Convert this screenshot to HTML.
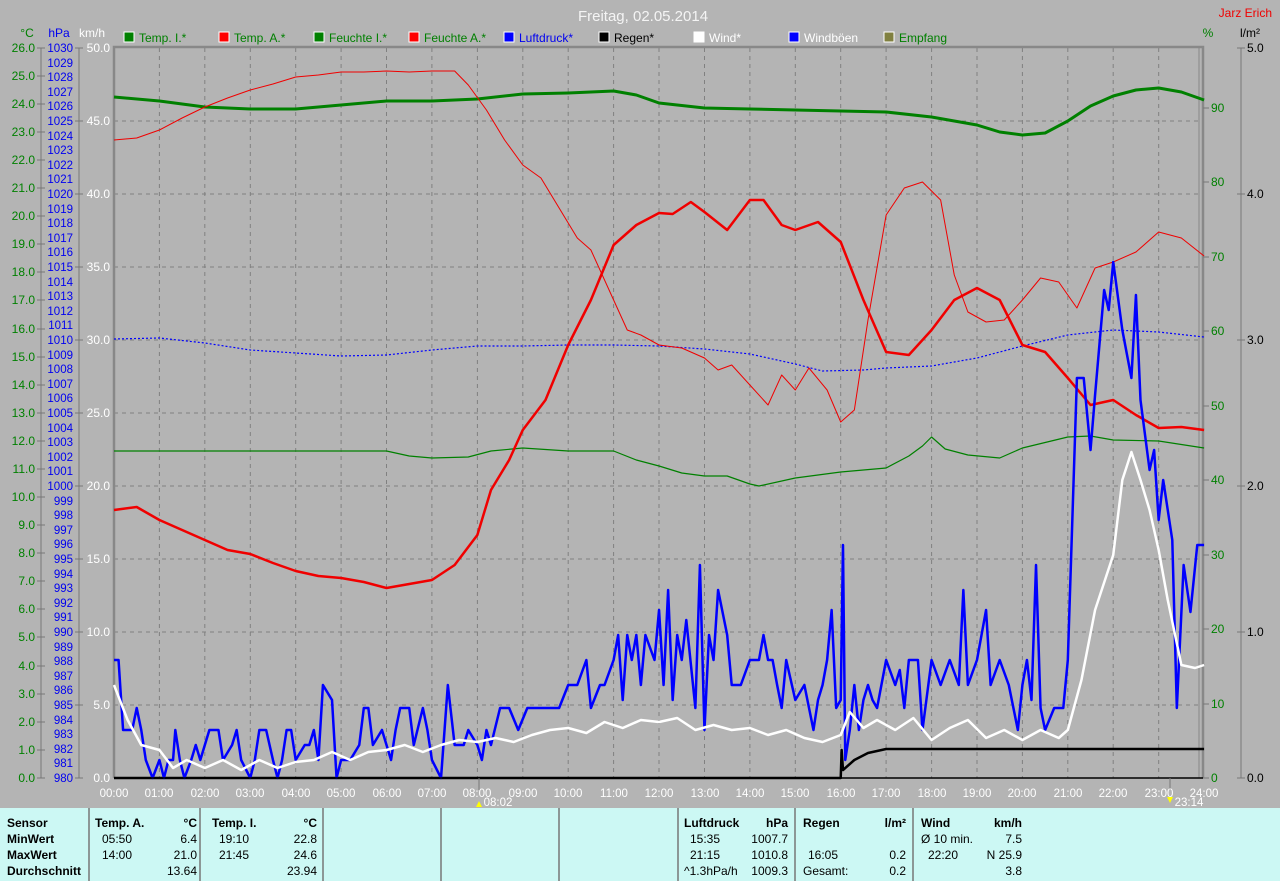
<!DOCTYPE html>
<html><head><meta charset="utf-8"><style>
html,body{margin:0;padding:0;background:#b4b4b4;}
svg{display:block;font-family:"Liberation Sans",sans-serif;}
</style></head><body>
<svg width="1280" height="881" viewBox="0 0 1280 881" xmlns="http://www.w3.org/2000/svg">
<rect width="1280" height="881" fill="#b4b4b4"/>
<text x="643" y="21" font-size="15" fill="#f4f4f4" text-anchor="middle">Freitag, 02.05.2014</text>
<text x="1272" y="17" font-size="12" fill="#f00000" text-anchor="end">Jarz Erich</text>
<g font-size="12">
<rect x="124" y="32" width="10" height="10" fill="#008000" stroke="#fff"/><text x="139" y="42" fill="#008000">Temp. I.*</text>
<rect x="219" y="32" width="10" height="10" fill="#f00" stroke="#fff"/><text x="234" y="42" fill="#008000">Temp. A.*</text>
<rect x="314" y="32" width="10" height="10" fill="#008000" stroke="#fff"/><text x="329" y="42" fill="#008000">Feuchte I.*</text>
<rect x="409" y="32" width="10" height="10" fill="#f00" stroke="#fff"/><text x="424" y="42" fill="#008000">Feuchte A.*</text>
<rect x="504" y="32" width="10" height="10" fill="#00f" stroke="#fff"/><text x="519" y="42" fill="#0000f0">Luftdruck*</text>
<rect x="599" y="32" width="10" height="10" fill="#000" stroke="#fff"/><text x="614" y="42" fill="#000">Regen*</text>
<rect x="694" y="32" width="10" height="10" fill="#fff" stroke="#fff"/><text x="709" y="42" fill="#fff">Wind*</text>
<rect x="789" y="32" width="10" height="10" fill="#00f" stroke="#fff"/><text x="804" y="42" fill="#fff">Windböen</text>
<rect x="884" y="32" width="10" height="10" fill="#808040" stroke="#fff"/><text x="899" y="42" fill="#008000">Empfang</text>
<text x="27" y="37" fill="#008000" text-anchor="middle">°C</text>
<text x="59" y="37" fill="#0000f0" text-anchor="middle">hPa</text>
<text x="92" y="37" fill="#fff" text-anchor="middle">km/h</text>
<text x="1208" y="37" fill="#008000" text-anchor="middle">%</text>
<text x="1250" y="37" fill="#000" text-anchor="middle">l/m²</text>
</g>
<!-- grid -->
<g stroke="#808080" stroke-dasharray="4,4" stroke-width="1">
<path d="M114 121H1203M114 194H1203M114 267H1203M114 340H1203M114 413H1203M114 486H1203M114 559H1203M114 632H1203M114 705H1203"/>
<path d="M159.4 48V778M204.8 48V778M250.3 48V778M295.7 48V778M341.1 48V778M386.5 48V778M431.9 48V778M477.4 48V778M522.8 48V778M568.2 48V778M613.6 48V778M659 48V778M704.5 48V778M749.9 48V778M795.3 48V778M840.7 48V778M886.1 48V778M931.6 48V778M977 48V778M1022.4 48V778M1067.8 48V778M1113.2 48V778M1158.7 48V778"/>
</g>
<path d="M114 778V47H1203V778" fill="none" stroke="#888" stroke-width="2.5"/>
<path d="M1199 48V778" stroke="#888" stroke-width="1"/>
<!-- left axes -->
<g stroke="#777" fill="none"><path d="M41 48V778M79 48V778M1241 48V778"/></g>
<g id="ax" font-size="12"></g>
<g font-size="12" text-anchor="end" fill="#008000">
<text x="35" y="52">26.0</text><text x="35" y="80">25.0</text><text x="35" y="108">24.0</text><text x="35" y="136">23.0</text><text x="35" y="164">22.0</text><text x="35" y="192">21.0</text><text x="35" y="220">20.0</text><text x="35" y="248">19.0</text><text x="35" y="276">18.0</text><text x="35" y="304">17.0</text><text x="35" y="333">16.0</text><text x="35" y="361">15.0</text><text x="35" y="389">14.0</text><text x="35" y="417">13.0</text><text x="35" y="445">12.0</text><text x="35" y="473">11.0</text><text x="35" y="501">10.0</text><text x="35" y="529">9.0</text><text x="35" y="557">8.0</text><text x="35" y="585">7.0</text><text x="35" y="613">6.0</text><text x="35" y="641">5.0</text><text x="35" y="670">4.0</text><text x="35" y="698">3.0</text><text x="35" y="726">2.0</text><text x="35" y="754">1.0</text><text x="35" y="782">0.0</text>
</g>
<g font-size="11.5" text-anchor="end" fill="#0000f0">
<text x="73" y="52">1030</text><text x="73" y="67">1029</text><text x="73" y="81">1028</text><text x="73" y="96">1027</text><text x="73" y="110">1026</text><text x="73" y="125">1025</text><text x="73" y="140">1024</text><text x="73" y="154">1023</text><text x="73" y="169">1022</text><text x="73" y="183">1021</text><text x="73" y="198">1020</text><text x="73" y="213">1019</text><text x="73" y="227">1018</text><text x="73" y="242">1017</text><text x="73" y="256">1016</text><text x="73" y="271">1015</text><text x="73" y="286">1014</text><text x="73" y="300">1013</text><text x="73" y="315">1012</text><text x="73" y="329">1011</text><text x="73" y="344">1010</text><text x="73" y="359">1009</text><text x="73" y="373">1008</text><text x="73" y="388">1007</text><text x="73" y="402">1006</text><text x="73" y="417">1005</text><text x="73" y="432">1004</text><text x="73" y="446">1003</text><text x="73" y="461">1002</text><text x="73" y="475">1001</text><text x="73" y="490">1000</text><text x="73" y="505">999</text><text x="73" y="519">998</text><text x="73" y="534">997</text><text x="73" y="548">996</text><text x="73" y="563">995</text><text x="73" y="578">994</text><text x="73" y="592">993</text><text x="73" y="607">992</text><text x="73" y="621">991</text><text x="73" y="636">990</text><text x="73" y="651">989</text><text x="73" y="665">988</text><text x="73" y="680">987</text><text x="73" y="694">986</text><text x="73" y="709">985</text><text x="73" y="724">984</text><text x="73" y="738">983</text><text x="73" y="753">982</text><text x="73" y="767">981</text><text x="73" y="782">980</text>
</g>
<g font-size="12" text-anchor="end" fill="#fff">
<text x="110" y="52">50.0</text><text x="110" y="125">45.0</text><text x="110" y="198">40.0</text><text x="110" y="271">35.0</text><text x="110" y="344">30.0</text><text x="110" y="417">25.0</text><text x="110" y="490">20.0</text><text x="110" y="563">15.0</text><text x="110" y="636">10.0</text><text x="110" y="709">5.0</text><text x="110" y="782">0.0</text>
</g>
<g font-size="12" fill="#008000">
<text x="1211" y="112">90</text><text x="1211" y="186">80</text><text x="1211" y="261">70</text><text x="1211" y="335">60</text><text x="1211" y="410">50</text><text x="1211" y="484">40</text><text x="1211" y="559">30</text><text x="1211" y="633">20</text><text x="1211" y="708">10</text><text x="1211" y="782">0</text>
</g>
<g font-size="12" fill="#000">
<text x="1247" y="52">5.0</text><text x="1247" y="198">4.0</text><text x="1247" y="344">3.0</text><text x="1247" y="490">2.0</text><text x="1247" y="636">1.0</text><text x="1247" y="782">0.0</text>
</g>
<g stroke="#777"><path d="M37 48H45M37 76H45M37 104H45M37 132H45M37 160H45M37 188H45M37 216H45M37 244H45M37 272H45M37 300H45M37 329H45M37 357H45M37 385H45M37 413H45M37 441H45M37 469H45M37 497H45M37 525H45M37 553H45M37 581H45M37 609H45M37 637H45M37 666H45M37 694H45M37 722H45M37 750H45M37 778H45"/>
<path d="M75 48H83M75 121H83M75 194H83M75 267H83M75 340H83M75 413H83M75 486H83M75 559H83M75 632H83M75 705H83M75 778H83"/>
<path d="M1203 108H1209M1203 182H1209M1203 257H1209M1203 331H1209M1203 406H1209M1203 480H1209M1203 555H1209M1203 629H1209M1203 704H1209M1203 778H1209"/>
<path d="M1237 48H1245M1237 194H1245M1237 340H1245M1237 486H1245M1237 632H1245M1237 778H1245"/></g>
<!-- curves -->
<g transform="translate(114,0) scale(45.42,1)" fill="none" stroke-linejoin="round">
<polyline vector-effect="non-scaling-stroke" stroke="#0000ff" stroke-width="1.2" stroke-dasharray="2,2" points="0,339 1,338 2,343 3,350 4,353 5,356 6,355 7,350 8,346 9,346 10,345 11,345 12,346 13,349 14,354 15,364 15.6,371 16.5,370 17,368 18,366 19,358 20,346 21,335 22,330 23,332 24,337"/>
<polyline vector-effect="non-scaling-stroke" stroke="#008000" stroke-width="1.2" points="0,451 6,451 6.5,456 7,458 7.8,457 8.3,451 9,448 10,451 11,451 11.5,460 12,466 12.5,473 13,476 13.5,476 14,484 14.2,486 15,478 16,472 17,468 17.5,456 17.8,446 18,437 18.3,449 18.8,455 19.5,458 20,448 21,437 21.5,436 22,440 23,441 24,448"/>
<polyline vector-effect="non-scaling-stroke" stroke="#008000" stroke-width="3" points="0,97 1,101 2,107 3,109 4,109 5,105 6,101 7,101 8,99 9,94 10,93 11,91 11.5,95 12,103 13,108 14,109 15,110 16,111 17,112 18,117 19,125 19.5,132 20,135 20.5,133 21,121 21.5,106 22,96 22.5,90 23,88 23.5,92 24,100"/>
<polyline vector-effect="non-scaling-stroke" stroke="#f00000" stroke-width="1" points="0,140 0.5,138 1,130 1.5,118 2,107 2.5,98 3,90 3.5,84 4,77 4.5,75 5,72 5.5,72 6,71 6.5,72 7,71 7.5,71 7.8,85 8.2,110 8.6,140 9,165 9.4,178 9.8,208 10.2,238 10.5,250 11,300 11.3,330 11.6,335 12,345 12.5,348 13,358 13.3,370 13.6,365 14,385 14.4,405 14.7,375 15,390 15.3,368 15.7,390 16,422 16.3,410 16.6,320 17,215 17.4,188 17.8,182 18.2,200 18.5,275 18.8,312 19.2,322 19.6,320 20,300 20.4,278 20.8,282 21.2,308 21.6,268 22,262 22.5,252 23,232 23.5,238 24,256"/>
<polyline vector-effect="non-scaling-stroke" stroke="#f00000" stroke-width="2.5" points="0,510 0.5,507 1,520 1.5,530 2,540 2.5,550 3,554 3.5,563 4,571 4.5,576 5,578 5.5,582 6,588 6.5,584 7,580 7.5,565 8,535 8.3,490 8.7,460 9,430 9.5,400 10,345 10.5,300 11,245 11.5,225 12,213 12.3,214 12.7,202 13,212 13.5,230 14,200 14.3,200 14.7,225 15,230 15.5,222 16,242 16.5,300 17,352 17.5,355 18,330 18.5,300 19,288 19.5,300 20,345 20.5,352 21,378 21.5,405 22,400 22.5,415 23,428 23.5,427 24,430"/>
<polyline vector-effect="non-scaling-stroke" stroke="#000" stroke-width="2.5" points="0,778 16,778 16.02,750 16.05,770 16.3,760 16.6,753 17,749 24,749"/>
<polyline vector-effect="non-scaling-stroke" stroke="#0000ff" stroke-width="2.5" points="0,660 0.1,660 0.2,730 0.4,730 0.5,708 0.6,730 0.7,760 0.85,778 1,760 1.1,778 1.2,760 1.3,760 1.35,730 1.45,760 1.55,778 1.7,760 1.8,745 1.9,760 2,745 2.1,730 2.3,730 2.4,760 2.6,745 2.7,730 2.8,760 3.0,778 3.1,760 3.2,730 3.35,730 3.5,760 3.6,778 3.7,760 3.8,730 3.9,730 4.0,760 4.2,745 4.3,745 4.4,730 4.5,760 4.6,685 4.8,700 4.9,778 5.0,760 5.2,760 5.4,745 5.5,708 5.6,708 5.7,745 5.9,730 6.1,760 6.2,730 6.3,708 6.5,708 6.6,745 6.8,708 6.9,730 7.0,760 7.2,778 7.35,685 7.5,745 7.7,745 7.8,730 8.0,745 8.1,760 8.2,730 8.3,745 8.5,708 8.7,708 8.9,730 9.1,708 9.3,708 9.5,708 9.8,708 10.0,685 10.2,685 10.4,660 10.5,708 10.7,685 10.8,685 11.0,660 11.1,635 11.2,700 11.3,635 11.4,660 11.5,635 11.6,685 11.7,635 11.9,660 12.0,610 12.1,685 12.2,590 12.3,700 12.4,635 12.5,660 12.6,620 12.8,708 12.9,565 13.0,730 13.1,635 13.2,660 13.3,590 13.5,635 13.6,685 13.8,685 14.0,660 14.2,660 14.3,635 14.4,660 14.5,660 14.6,685 14.7,708 14.8,660 15.0,700 15.2,685 15.4,730 15.5,700 15.6,685 15.7,660 15.8,610 15.9,708 16.0,700 16.05,545 16.1,760 16.2,730 16.3,685 16.4,730 16.5,700 16.6,685 16.7,700 16.8,708 17.0,660 17.2,685 17.3,670 17.4,708 17.5,660 17.7,660 17.8,730 18.0,660 18.2,685 18.4,660 18.6,685 18.7,590 18.8,685 19.0,660 19.2,610 19.3,685 19.5,660 19.7,685 19.9,730 20.0,685 20.1,660 20.2,700 20.3,565 20.4,708 20.5,730 20.7,708 20.9,708 21.0,660 21.2,378 21.35,378 21.5,450 21.6,395 21.8,290 21.9,310 22.0,262 22.2,330 22.4,378 22.5,295 22.6,400 22.8,470 22.9,450 23.0,520 23.1,480 23.3,540 23.4,708 23.55,565 23.7,612 23.85,545 24,545"/>
<polyline vector-effect="non-scaling-stroke" stroke="#ffffff" stroke-width="2.5" points="0,685 0.3,720 0.6,745 1,750 1.3,768 1.6,760 2,768 2.4,760 2.8,770 3.2,760 3.6,768 4,762 4.4,760 4.8,752 5.2,760 5.6,752 6,750 6.4,745 6.8,752 7.2,745 7.6,740 8,742 8.4,738 8.8,742 9.2,735 9.6,730 10,728 10.4,733 10.8,722 11.2,728 11.6,720 12,722 12.4,718 12.8,730 13.2,725 13.6,730 14,728 14.4,735 14.8,730 15.2,738 15.6,742 16,735 16.2,712 16.5,728 16.8,720 17.2,730 17.6,718 18,740 18.4,728 18.8,720 19.2,738 19.6,730 20,740 20.4,730 20.8,738 21,730 21.3,680 21.6,610 22,555 22.2,480 22.4,452 22.6,480 22.8,510 23,550 23.2,600 23.5,665 23.8,668 24,665"/>
</g>
<path d="M114 778H1203" stroke="#000" stroke-width="1.5"/>
<g stroke="#777"><path d="M479 778V790M1170 778V790"/></g>
<g font-size="11.5" fill="#fff" text-anchor="middle">
<text x="114" y="797">00:00</text><text x="159" y="797">01:00</text><text x="205" y="797">02:00</text><text x="250" y="797">03:00</text><text x="296" y="797">04:00</text><text x="341" y="797">05:00</text><text x="387" y="797">06:00</text><text x="432" y="797">07:00</text><text x="477" y="797">08:00</text><text x="523" y="797">09:00</text><text x="568" y="797">10:00</text><text x="614" y="797">11:00</text><text x="659" y="797">12:00</text><text x="705" y="797">13:00</text><text x="750" y="797">14:00</text><text x="795" y="797">15:00</text><text x="841" y="797">16:00</text><text x="886" y="797">17:00</text><text x="932" y="797">18:00</text><text x="977" y="797">19:00</text><text x="1022" y="797">20:00</text><text x="1068" y="797">21:00</text><text x="1113" y="797">22:00</text><text x="1159" y="797">23:00</text><text x="1204" y="797">24:00</text>
<text x="498" y="806">08:02</text><text x="1189" y="806">23:14</text>
</g>
<path d="M476 807l3-6 3 6z" fill="#ff0"/><path d="M1167 797l3 6 3-6z" fill="#ff0"/>
<!-- bottom table -->
<rect x="0" y="808" width="1280" height="73" fill="#ccf8f4"/>
<g stroke="#777" stroke-width="1.5"><path d="M89 808V881M200 808V881M323 808V881M441 808V881M559 808V881M678 808V881M795 808V881M913 808V881"/></g>
<g font-size="12" fill="#000">
<g font-weight="bold"><text x="7" y="827">Sensor</text><text x="7" y="843">MinWert</text><text x="7" y="859">MaxWert</text><text x="7" y="875">Durchschnitt</text>
<text x="95" y="827">Temp. A.</text><text x="197" y="827" text-anchor="end">°C</text>
<text x="212" y="827">Temp. I.</text><text x="317" y="827" text-anchor="end">°C</text>
<text x="684" y="827">Luftdruck</text><text x="788" y="827" text-anchor="end">hPa</text>
<text x="803" y="827">Regen</text><text x="906" y="827" text-anchor="end">l/m²</text>
<text x="921" y="827">Wind</text><text x="1022" y="827" text-anchor="end">km/h</text></g>
<text x="102" y="843">05:50</text><text x="197" y="843" text-anchor="end">6.4</text>
<text x="102" y="859">14:00</text><text x="197" y="859" text-anchor="end">21.0</text>
<text x="197" y="875" text-anchor="end">13.64</text>
<text x="219" y="843">19:10</text><text x="317" y="843" text-anchor="end">22.8</text>
<text x="219" y="859">21:45</text><text x="317" y="859" text-anchor="end">24.6</text>
<text x="317" y="875" text-anchor="end">23.94</text>
<text x="690" y="843">15:35</text><text x="788" y="843" text-anchor="end">1007.7</text>
<text x="690" y="859">21:15</text><text x="788" y="859" text-anchor="end">1010.8</text>
<text x="684" y="875">^1.3hPa/h</text><text x="788" y="875" text-anchor="end">1009.3</text>
<text x="808" y="859">16:05</text><text x="906" y="859" text-anchor="end">0.2</text>
<text x="803" y="875">Gesamt:</text><text x="906" y="875" text-anchor="end">0.2</text>
<text x="921" y="843">Ø 10 min.</text><text x="1022" y="843" text-anchor="end">7.5</text>
<text x="928" y="859">22:20</text><text x="1022" y="859" text-anchor="end">N 25.9</text>
<text x="1022" y="875" text-anchor="end">3.8</text>
</g>
</svg>
</body></html>
